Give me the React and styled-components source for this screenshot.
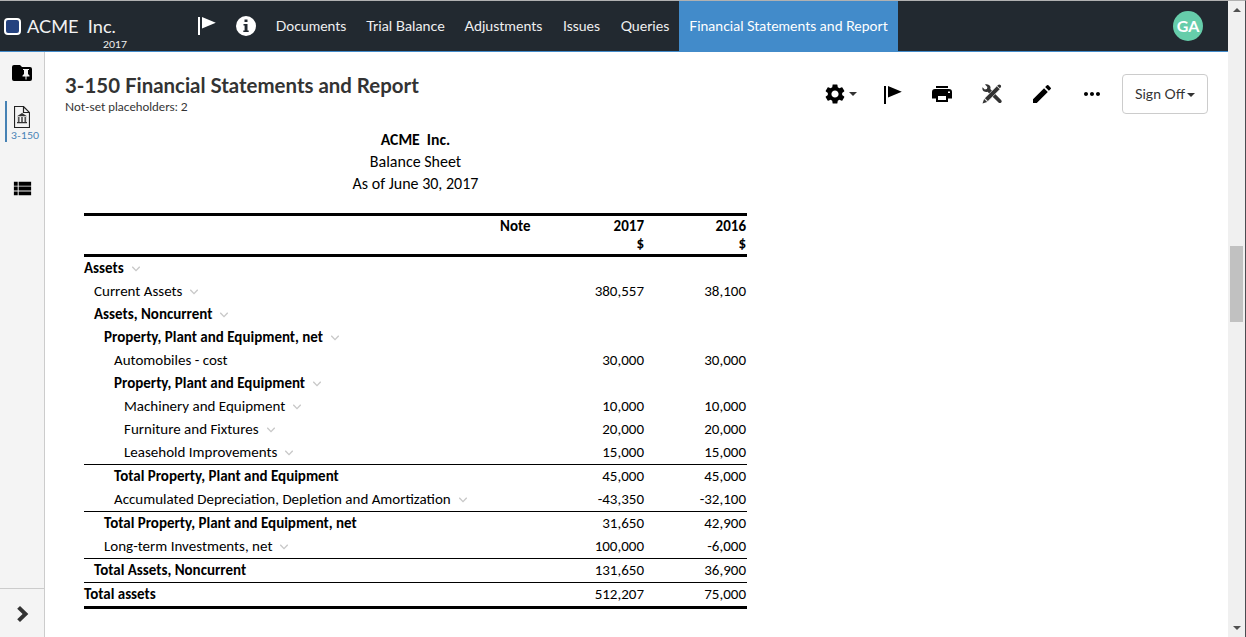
import React from 'react';
import styled, { createGlobalStyle } from 'styled-components';
import { MdSettings, MdEdit, MdMoreHoriz, MdViewList } from 'react-icons/md';

const GlobalStyle = createGlobalStyle`
  * { box-sizing: border-box; }
  body { margin: 0; background: #fff; overflow: hidden; }
`;

const Page = styled.div`
  display: flex;
  width: 1246px;
  height: 637px;
  border-top: 1px solid #b1b1b1;
  border-right: 1px solid #4b4c51;
  font: 14px/20px Lato, "Open Sans", sans-serif;
  color: #333;
`;

const Main = styled.div`
  width: 1228px;
  display: flex;
  flex-direction: column;
`;

const TopBar = styled.header`
  display: flex;
  flex: none;
  height: 51px;
  background: #222930;
  border-bottom: 1px solid #428bca;
  color: #f2f2f2;
`;

const Brand = styled.div`
  width: 198px;
  display: flex;
  padding: 17px 0 0 4px;
`;

const BrandMark = styled.span`
  width: 17px;
  height: 17px;
  border: 2px solid #fff;
  border-radius: 4px;
  background: #25427f;
`;

const BrandText = styled.div`
  width: 100px;
  margin-left: 6px;
  display: flex;
  flex-direction: column;
`;

const BrandName = styled.span`
  font-size: 18.2px;
  line-height: 18px;
  margin-top: -1px;
  white-space: pre;
`;

const BrandYear = styled.span`
  font-size: 10.4px;
  line-height: 12px;
  margin-top: 3px;
  align-self: flex-end;
`;

const NavIcon = styled.span`
  display: flex;
  align-items: center;
  width: ${(p) => p.$w}px;
  height: 50px;
  color: #fff;
`;

const NavItem = styled.a`
  width: ${(p) => p.$w}px;
  height: 50px;
  line-height: 50px;
  background: ${(p) => (p.$active ? '#428bca' : 'transparent')};
  color: ${(p) => (p.$active ? '#fff' : '#f0f0f0')};
  font-size: ${(p) => p.$size || 14}px;
  text-align: center;
  white-space: nowrap;
`;

const Avatar = styled.div`
  margin: 10px 25px 0 auto;
  width: 30px;
  height: 30px;
  border-radius: 50%;
  background: #66cdaa;
  color: #fff;
  font-weight: 700;
  font-size: 16px;
  line-height: 30px;
  text-align: center;
`;

const Body = styled.div`
  display: flex;
  flex: 1;
`;

const SideBar = styled.aside`
  width: 45px;
  display: flex;
  flex-direction: column;
  background: #f4f4f4;
  border-right: 1px solid #ccc;
`;

const SideIcon = styled.div`
  height: ${(p) => p.$h}px;
  display: flex;
  justify-content: center;
  align-items: center;
  color: #000;
`;

const SideDoc = styled.div`
  display: flex;
  flex-direction: column;
  align-items: center;
  height: 41px;
  margin: 8px 0 26px 5px;
  padding: 5px 7px 0 0;
  border-left: 2px solid #4682b4;
  color: #4682b4;
  font-size: 10.4px;
  line-height: 12px;

  svg { flex: none; margin-bottom: 1px; }
  span { margin-right: -6px; }
`;

const Expand = styled.div`
  margin-top: auto;
  height: 49px;
  padding: 2px 0 0 1px;
  border-top: 1px solid #ccc;
  display: flex;
  align-items: center;
  justify-content: center;
`;

const Content = styled.main`
  flex: 1;
  padding: 22px 20px 0 20px;
`;

const Heading = styled.div`
  display: flex;
  justify-content: space-between;
  height: 55px;
`;

const Title = styled.h1`
  margin: 0;
  font-size: 20.43px;
  line-height: 22px;
  font-weight: 700;
`;

const Subtitle = styled.div`
  margin-top: 2px;
  font-size: 12px;
  line-height: 18px;
`;

const Tools = styled.div`
  display: flex;
  align-items: center;
  height: 40px;
  color: #000;
`;

const Tool = styled.span`
  position: relative;
  display: flex;
  justify-content: center;
  width: 24px;
  margin-right: ${(p) => p.$gap || 26}px;
`;

const FlagTool = styled(Tool)`
  padding: 2px 0 0 2px;
`;

const Caret = styled.i`
  display: inline-block;
  border: 4px solid transparent;
  border-top-color: #333;
  border-bottom: 0;
`;

const MenuCaret = styled(Caret)`
  position: absolute;
  left: 26px;
  top: 10px;
`;

const SignOff = styled.button`
  display: flex;
  align-items: center;
  justify-content: center;
  gap: 2px;
  width: 86px;
  height: 40px;
  padding: 0;
  border: 1px solid #ccc;
  border-radius: 4px;
  background: #fff;
  color: #333;
  font: inherit;

  i { margin-top: 1px; }
`;

const Report = styled.section`
  width: 663px;
  margin-left: 19px;
  font-family: Carlito, Calibri, Lato, sans-serif;
  font-size: 15px;
  color: #000;
`;

const ReportLine = styled.div`
  height: 22px;
  line-height: 22px;
  font-size: ${(p) => (p.$bold ? 15.7 : 16)}px;
  font-weight: ${(p) => (p.$bold ? 700 : 400)};
  text-align: center;
  white-space: pre;
`;

const HeadRow = styled.div`
  display: flex;
  margin-top: 18px;
  height: 44px;
  padding-top: 1px;
  border-top: 3px solid #000;
  border-bottom: 3px solid #000;
  font-weight: 700;
  line-height: 18px;
`;

const Row = styled.div`
  display: flex;
  height: ${(p) => (p.$rule ? 24 : 23)}px;
  line-height: 23px;
  border-top: ${(p) => (p.$rule ? '1px solid #000' : '0')};
`;

const Label = styled.div`
  width: 416px;
  display: flex;
  align-items: center;
  padding-left: ${(p) => p.$level * 10}px;
  font-weight: ${(p) => (p.$bold ? 700 : 400)};
  white-space: nowrap;

  svg { margin: 1px 0 0 8px; }
`;

const Note = styled.div`
  width: 60px;
`;

const Amount = styled.div`
  width: ${(p) => p.$w}px;
  text-align: right;
`;

const TableEnd = styled.div`
  height: 3px;
  background: #000;
`;

const ScrollBar = styled.div`
  width: 17px;
  display: flex;
  flex-direction: column;
  justify-content: space-between;
  align-items: center;
  padding: 7px 0;
  background: #f0f0f0;
`;

const ScrollThumb = styled.div`
  width: 13px;
  height: 76px;
  margin-bottom: 71px;
  background: #c1c1c1;
`;

const Flag = () => (
  <svg width="18" height="18" viewBox="0 0 18 18" fill="currentColor">
    <path d="M0 0h2v18H0zM4 0l13.8 5.8L4 11.5z" />
  </svg>
);

const Info = () => (
  <svg width="20" height="20" viewBox="0 0 20 20">
    <circle cx="10" cy="10" r="10" fill="#fff" />
    <path d="M8.500 3.500h3v2.500h-3zM7.500 8h4v6.500h1.200V16H7.300v-1.500h1.300v-5H7.500z" fill="#222930" />
  </svg>
);

const FolderPin = () => (
  <svg width="20" height="16" viewBox="0 0 20 16">
    <path d="M2 0h6l2 2h8a2 2 0 0 1 2 2v10a2 2 0 0 1-2 2H2a2 2 0 0 1-2-2V2a2 2 0 0 1 2-2z" fill="#000" />
    <path d="M11 4h6v1h-1v4l1.500 1.500v1h-3v3h-1v-3h-3v-1L12 9V5h-1z" fill="#f4f4f4" />
  </svg>
);

const BankDoc = () => (
  <svg width="16" height="22" viewBox="0 0 16 22" fill="none" stroke="#222">
    <path d="M.5.5h9l6 6v15H.5zM9.5.5v6h6" strokeWidth="1.2" />
    <path d="M3 10.2L8 7l5 3.2zM3 16h10v1.3H3z" fill="#333" stroke="none" />
    <path d="M4.700 11v5M8 11v5M11.300 11v5" strokeWidth="1.7" stroke="#555" />
  </svg>
);

const Printer = () => (
  <svg width="20" height="16" viewBox="0 0 20 16">
    <path d="M4 0h12v2H4zM3 3h14a3 3 0 0 1 3 3v6.500h-4V16H4v-3.500H0V6a3 3 0 0 1 3-3z" fill="#000" />
    <path d="M6 10h8v4H6zM16 5.500h2v1.500h-2z" fill="#fff" />
  </svg>
);

const WrenchPencil = () => (
  <svg width="20" height="20" viewBox="0 0 20 20" fill="#333">
    <path d="M3 .5c2.200-.8 4.800.2 5.400 2.300.2.900.1 1.500-.1 2.200l10.800 10.900c.8.800.8 1.800.1 2.600-.8.800-1.900.8-2.700 0L5.500 7.800c-1 .4-2.200.4-3.300-.2C.6 6.700.1 5 .5 3.300l2.300 2.200 2.100-.4.500-2.200z" />
    <path d="M14.800 2l3.200 3.200L5.800 17.400l-3.200-3.200z" stroke="#fff" strokeWidth=".6" />
    <path d="M16 .9c.8-.7 1.700-.7 2.500 0s.8 1.800.1 2.600l-.8.800-2.600-2.600zM2.100 14.900l3 3L.5 19.500z" />
  </svg>
);

const Chevron = () => (
  <svg width="8" height="6" viewBox="0 0 8 6" fill="none" stroke="#c8c8c8" strokeWidth="1.300">
    <path d="M.3.8L4 4.600 7.700.8" />
  </svg>
);

const ArrowRight = () => (
  <svg width="12" height="16" viewBox="0 0 12 16" fill="#333">
    <path d="M3 0l8.300 8L3 16 .2 13.200 5.600 8 .2 2.800z" />
  </svg>
);

const ScrollArrow = ({ down }) => (
  <svg width="8" height="4" viewBox="0 0 8 4" fill="#505050">
    <path d={down ? 'M0 0h8L4 4z' : 'M0 4h8L4 0z'} />
  </svg>
);

const navItems = [
  { label: 'Documents', w: 90 },
  { label: 'Trial Balance', w: 99, size: 14.3 },
  { label: 'Adjustments', w: 97, size: 14.15 },
  { label: 'Issues', w: 59 },
  { label: 'Queries', w: 68, size: 14.15 },
  { label: 'Financial Statements and Report', w: 219, active: true },
];

const rows = [
  { label: 'Assets', level: 0, bold: true, menu: true },
  { label: 'Current Assets', level: 1, menu: true, v: ['380,557', '38,100'] },
  { label: 'Assets, Noncurrent', level: 1, bold: true, menu: true },
  { label: 'Property, Plant and Equipment, net', level: 2, bold: true, menu: true },
  { label: 'Automobiles - cost', level: 3, v: ['30,000', '30,000'] },
  { label: 'Property, Plant and Equipment', level: 3, bold: true, menu: true },
  { label: 'Machinery and Equipment', level: 4, menu: true, v: ['10,000', '10,000'] },
  { label: 'Furniture and Fixtures', level: 4, menu: true, v: ['20,000', '20,000'] },
  { label: 'Leasehold Improvements', level: 4, menu: true, v: ['15,000', '15,000'] },
  { label: 'Total Property, Plant and Equipment', level: 3, bold: true, rule: true, v: ['45,000', '45,000'] },
  { label: 'Accumulated Depreciation, Depletion and Amortization', level: 3, menu: true, v: ['-43,350', '-32,100'] },
  { label: 'Total Property, Plant and Equipment, net', level: 2, bold: true, rule: true, v: ['31,650', '42,900'] },
  { label: 'Long-term Investments, net', level: 2, menu: true, v: ['100,000', '-6,000'] },
  { label: 'Total Assets, Noncurrent', level: 1, bold: true, rule: true, v: ['131,650', '36,900'] },
  { label: 'Total assets', level: 0, bold: true, rule: true, v: ['512,207', '75,000'] },
];

export default function App() {
  return (
    <Page>
      <GlobalStyle />
      <Main>
        <TopBar>
          <Brand>
            <BrandMark />
            <BrandText>
              <BrandName>{'ACME\u00a0 Inc.'}</BrandName>
              <BrandYear>2017</BrandYear>
            </BrandText>
          </Brand>
          <NavIcon $w={38}><Flag /></NavIcon>
          <NavIcon $w={30}><Info /></NavIcon>
          {navItems.map((n) => (
            <NavItem key={n.label} $w={n.w} $size={n.size} $active={n.active}>{n.label}</NavItem>
          ))}
          <Avatar>GA</Avatar>
        </TopBar>
        <Body>
          <SideBar>
            <SideIcon $h={41}><FolderPin /></SideIcon>
            <SideDoc><BankDoc /><span>3-150</span></SideDoc>
            <SideIcon $h={41}><MdViewList size={23} /></SideIcon>
            <Expand><ArrowRight /></Expand>
          </SideBar>
          <Content>
            <Heading>
              <div>
                <Title>3-150 Financial Statements and Report</Title>
                <Subtitle>Not-set placeholders: 2</Subtitle>
              </div>
              <Tools>
                <Tool $gap={33}><MdSettings size={24} /><MenuCaret /></Tool>
                <FlagTool><Flag /></FlagTool>
                <Tool><Printer /></Tool>
                <Tool><WrenchPencil /></Tool>
                <Tool><MdEdit size={24} /></Tool>
                <Tool $gap={18}><MdMoreHoriz size={24} /></Tool>
                <SignOff>Sign Off<Caret /></SignOff>
              </Tools>
            </Heading>
            <Report>
              <ReportLine $bold>{'ACME\u00a0 Inc.'}</ReportLine>
              <ReportLine>Balance Sheet</ReportLine>
              <ReportLine>As of June 30, 2017</ReportLine>
              <HeadRow>
                <Label />
                <Note>Note</Note>
                <Amount $w={84}>2017<br />$</Amount>
                <Amount $w={102}>2016<br />$</Amount>
              </HeadRow>
              {rows.map((r) => (
                <Row key={r.label} $rule={r.rule}>
                  <Label $level={r.level} $bold={r.bold}>{r.label}{r.menu && <Chevron />}</Label>
                  <Note />
                  <Amount $w={84}>{r.v && r.v[0]}</Amount>
                  <Amount $w={102}>{r.v && r.v[1]}</Amount>
                </Row>
              ))}
              <TableEnd />
            </Report>
          </Content>
        </Body>
      </Main>
      <ScrollBar>
        <ScrollArrow />
        <ScrollThumb />
        <ScrollArrow down />
      </ScrollBar>
    </Page>
  );
}
